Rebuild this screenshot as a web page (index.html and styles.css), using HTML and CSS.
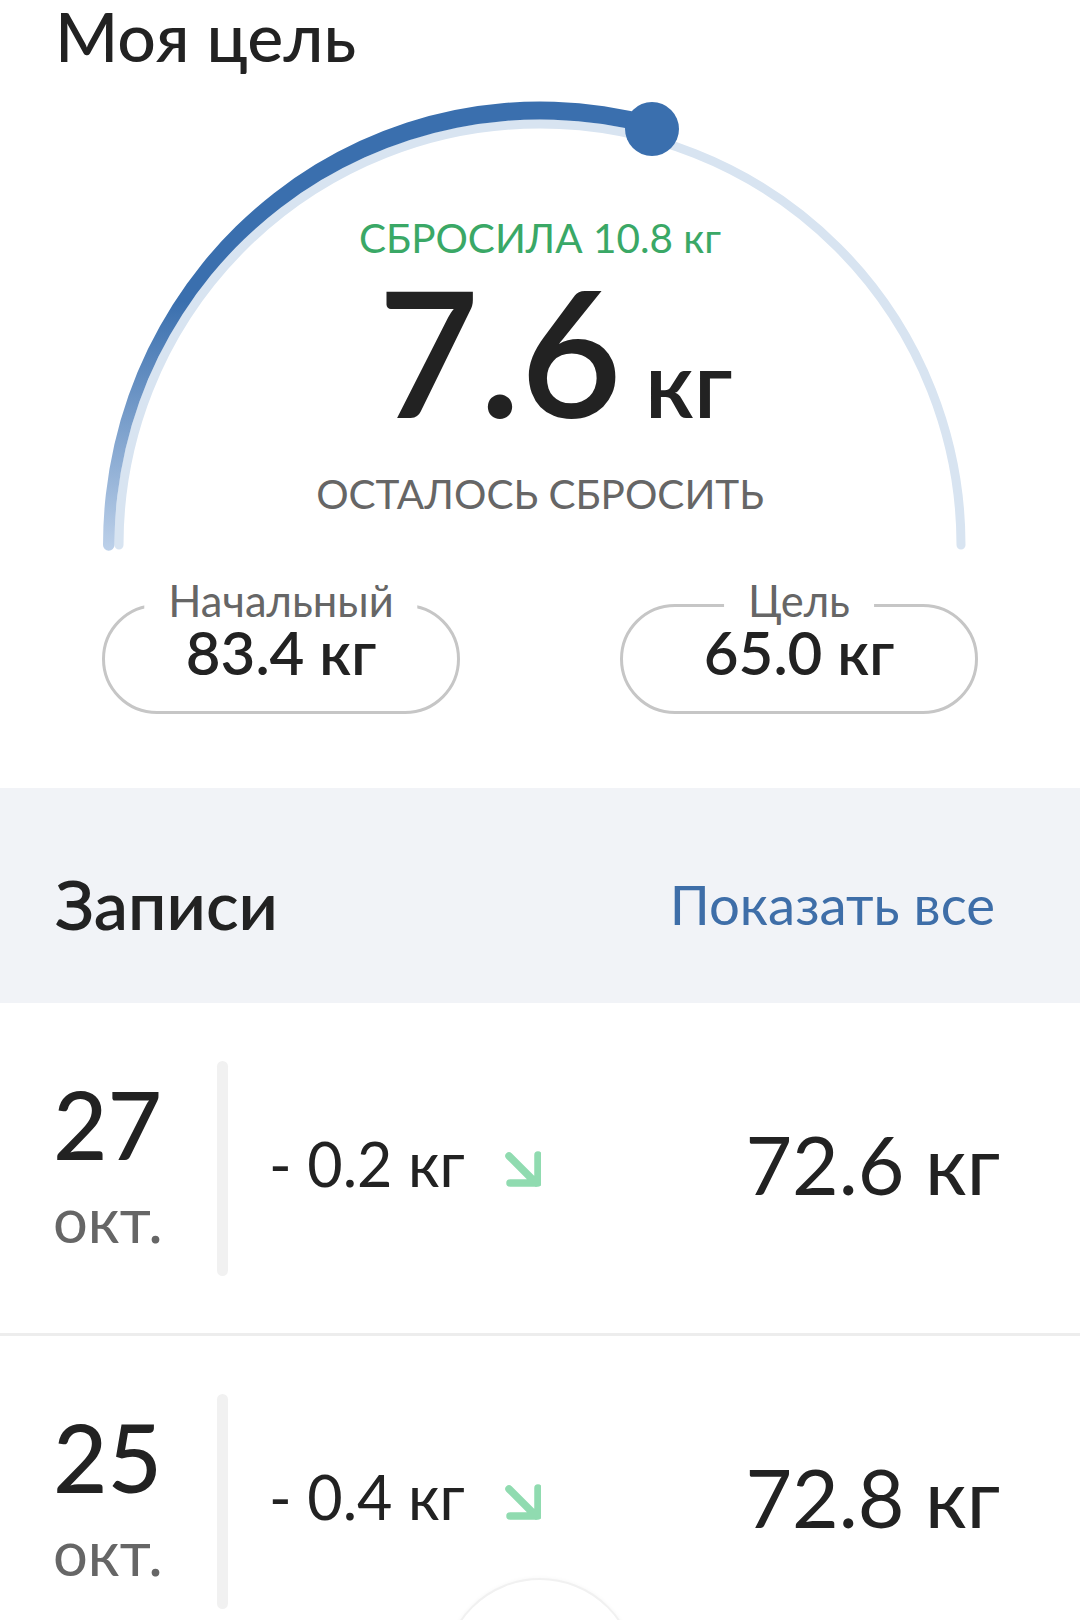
FILE: index.html
```html
<!DOCTYPE html>
<html>
  <head>
    <title>Моя цель</title>
    <link rel="stylesheet" href="styles.css">
  </head>
  <body>
    <div class="goal">
      <h1 class="goal-title">Моя цель</h1>

      <div class="gauge">
        <svg class="gauge-arc" width="1080" height="489" viewBox="0 71 1080 489">
          <defs>
            <linearGradient id="progressFill" gradientUnits="userSpaceOnUse" x1="0" y1="548" x2="0" y2="300">
              <stop offset="0" stop-color="#bcd0e9" />
              <stop offset="1" stop-color="#3a6fae" />
            </linearGradient>
          </defs>
          <!-- track -->
          <path d="M 119 544 A 421 421 0 0 1 961 544" fill="none" stroke="#d8e4f1" stroke-width="9" stroke-linecap="round" />
          <!-- progress band, lost 10.8 of 18.4 -->
          <path d="M 103 544 A 437 443.5 0 0 1 653.1 115.6 L 650.1 133 A 425.5 425.5 0 0 0 114.5 544 A 5.75 5.75 0 0 1 103 544 Z" fill="url(#progressFill)" />
          <circle cx="652" cy="128" r="27" fill="#3a6fae" />
        </svg>

        <div class="gauge-lost">СБРОСИЛА 10.8 кг</div>
        <div class="gauge-left">7.6<span class="gauge-unit"> кг</span></div>
        <div class="gauge-caption">ОСТАЛОСЬ СБРОСИТЬ</div>
      </div>

      <div class="pills">
        <div class="pill">
          <span class="pill-label">Начальный</span>
          <span class="pill-value">83.4 кг</span>
        </div>
        <div class="pill">
          <span class="pill-label">Цель</span>
          <span class="pill-value">65.0 кг</span>
        </div>
      </div>
    </div>

    <div class="records-head">
      <h2 class="records-title">Записи</h2>
      <a class="records-all" href="#">Показать все</a>
    </div>

    <div class="record">
      <div class="record-date">
        <span class="record-day">27</span>
        <span class="record-month">окт.</span>
      </div>
      <div class="record-bar"></div>
      <div class="record-main">
        <span class="record-delta">- 0.2 кг</span>
        <svg class="record-arrow" width="40" height="40" viewBox="0 0 40 40">
          <path d="M 8 7 L 35 34 M 9 34 L 37 34 L 37 6" fill="none" stroke="#90dbb0" stroke-width="7.5" stroke-linecap="round" stroke-linejoin="round" />
        </svg>
        <span class="record-weight">72.6 кг</span>
      </div>
    </div>

    <div class="record">
      <div class="record-date">
        <span class="record-day">25</span>
        <span class="record-month">окт.</span>
      </div>
      <div class="record-bar"></div>
      <div class="record-main">
        <span class="record-delta">- 0.4 кг</span>
        <svg class="record-arrow" width="40" height="40" viewBox="0 0 40 40">
          <path d="M 8 7 L 35 34 M 9 34 L 37 34 L 37 6" fill="none" stroke="#90dbb0" stroke-width="7.5" stroke-linecap="round" stroke-linejoin="round" />
        </svg>
        <span class="record-weight">72.8 кг</span>
      </div>
    </div>

    <!-- floating add button, mostly below the fold -->
    <div class="fab"></div>
  </body>
</html>
```

FILE: styles.css
```css
body {
  font-family: Lato, "Noto Sans", sans-serif;
  margin: 0;
  padding: 0;
  background-color: #fff;
  color: #222;
  position: relative;
  overflow: hidden;
}

.goal-title {
  margin: 0;
  padding: 0 55px;
  font-size: 68px;
  font-weight: 500;
  line-height: 72px;
}

/* gauge */

.gauge {
  position: relative;
  height: 489px;
  padding-top: 142px;
  box-sizing: border-box;
  text-align: center;
}

.gauge-arc {
  position: absolute;
  top: 0;
  left: 0;
}

.gauge-lost,
.gauge-left,
.gauge-caption {
  position: relative;
}

.gauge-lost {
  font-size: 40.5px;
  line-height: 48px;
  color: #3aa866;
}

.gauge-left {
  font-size: 175px;
  font-weight: 600;
  line-height: 176px;
  padding-left: 30px;
}

.gauge-unit {
  font-size: 92px;
  line-height: 100px;
}

.gauge-caption {
  margin-top: 30px;
  font-size: 40.5px;
  line-height: 52px;
  color: #666;
}

/* start / goal pills */

.pills {
  display: flex;
  justify-content: space-between;
  padding: 0 102px;
  margin-top: 43px;
}

.pill {
  position: relative;
  width: 358px;
  height: 110px;
  box-sizing: border-box;
  border: 3px solid #c6c6c6;
  border-radius: 55px;
  padding-top: 16px;
  text-align: center;
}

.pill-label {
  position: absolute;
  top: -26px;
  left: 50%;
  transform: translateX(-50%);
  padding: 0 24px;
  background-color: #fff;
  font-size: 43.5px;
  line-height: 38px;
  color: #666;
  white-space: nowrap;
}

.pill-value {
  display: block;
  font-size: 60px;
  font-weight: 600;
  line-height: 58px;
}

/* records */

.records-head {
  display: flex;
  justify-content: space-between;
  align-items: center;
  height: 215px;
  box-sizing: border-box;
  margin-top: 74px;
  padding: 17px 85px 0 55px;
  background-color: #f1f3f7;
}

.records-title {
  margin: 0;
  font-size: 68px;
  font-weight: 600;
  line-height: 70px;
}

.records-all {
  font-size: 54.5px;
  line-height: 60px;
  color: #3e6ea8;
  text-decoration: none;
}

.record {
  display: flex;
  align-items: flex-start;
  height: 333px;
  box-sizing: border-box;
  padding: 58px 80px 0 53px;
  border-bottom: 3px solid #ededed;
}

.record-date {
  display: flex;
  flex-direction: column;
  width: 164px;
  padding-top: 14px;
}

.record-day {
  font-size: 94px;
  font-weight: 500;
  line-height: 97px;
}

.record-month {
  margin-top: 15px;
  font-size: 61.5px;
  line-height: 64px;
  color: #666;
}

.record-bar {
  width: 11px;
  height: 215px;
  border-radius: 6px;
  background-color: #f1f1f1;
}

.record-main {
  flex: 1;
  display: flex;
  align-items: center;
  height: 215px;
  box-sizing: border-box;
  padding: 0 0 10px 41px;
}

.record-delta {
  font-size: 61px;
  line-height: 60px;
}

.record-arrow {
  margin: 10px 0 0 36px;
}

.record-weight {
  margin-left: auto;
  font-size: 80.5px;
  line-height: 86px;
}

.fab {
  position: absolute;
  top: 1578px;
  left: 443px;
  width: 194px;
  height: 194px;
  border-radius: 50%;
  background-color: #fff;
  border: 2px solid #f1f1f1;
  box-shadow: 0 0 4px rgba(0, 0, 0, 0.04);
  box-sizing: border-box;
}
```
